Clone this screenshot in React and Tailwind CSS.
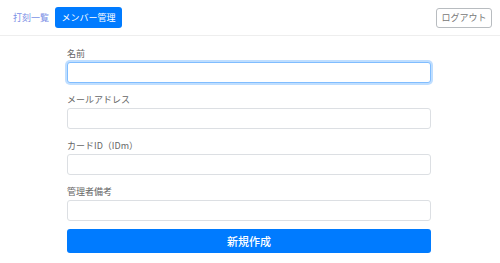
import React from "react";

function Field({ label, focused }) {
  return (
    <div className="flex flex-col">
      <label className="text-[9px] leading-[13px] text-[#666] mb-[2px]">{label}</label>
      <input
        className={
          "h-[21px] w-full rounded-[3px] border bg-white outline-none " +
          (focused
            ? "border-[#80bdff] shadow-[0_0_0_2px_rgba(0,123,255,0.25)]"
            : "border-[#dcdfe3]")
        }
      />
    </div>
  );
}

export default function App() {
  return (
    <div className="w-[500px] h-[263px] bg-white font-['Noto_Sans_CJK_JP','Noto_Sans',sans-serif] overflow-hidden">
      <header className="h-[36px] border-b border-[#eeeeee] flex items-center pl-[13px] pr-[8px]">
        <a className="text-[9px] text-[#7b8fe6] leading-none">打刻一覧</a>
        <button className="ml-[6px] h-[21px] w-[67px] rounded-[3px] bg-[#007bff] text-white text-[9px] flex items-center justify-center">
          メンバー管理
        </button>
        <button className="ml-auto h-[20px] w-[56px] rounded-[3px] border border-[#b8bcc0] text-[#777] text-[9px] flex items-center justify-center">
          ログアウト
        </button>
      </header>
      <main className="ml-[67px] w-[364px] pt-[11px] flex flex-col gap-[10px]">
        <Field label="名前" focused />
        <Field label="メールアドレス" />
        <Field label="カードID（IDm）" />
        <Field label="管理者備考" />
        <button className="-mt-[2px] h-[24px] w-full rounded-[3px] bg-[#007bff] text-white text-[11px] font-medium flex items-center justify-center">
          新規作成
        </button>
      </main>
    </div>
  );
}
